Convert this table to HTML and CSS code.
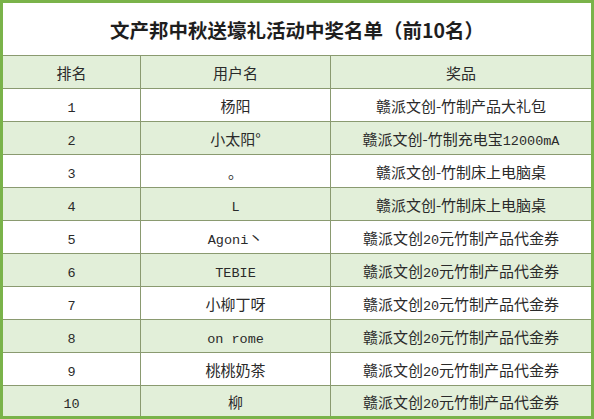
FILE: index.html
```html
<!DOCTYPE html>
<html lang="zh-CN">
<head>
<meta charset="utf-8">
<title>文产邦中秋送壕礼活动中奖名单</title>
<link rel="stylesheet" href="styles.css">
</head>
<body>
<div class="board">
  <div class="title">文产邦中秋送壕礼活动中奖名单（前10名）</div>
  <div class="cell head">排名</div>
  <div class="cell head">用户名</div>
  <div class="cell head end">奖品</div>

  <div class="cell"><span class="en">1</span></div>
  <div class="cell">杨阳</div>
  <div class="cell end">赣派文创-竹制产品大礼包</div>

  <div class="cell alt"><span class="en">2</span></div>
  <div class="cell alt">小太阳°</div>
  <div class="cell alt end">赣派文创-竹制充电宝<span class="en">12000mA</span></div>

  <div class="cell"><span class="en">3</span></div>
  <div class="cell">。</div>
  <div class="cell end">赣派文创-竹制床上电脑桌</div>

  <div class="cell alt"><span class="en">4</span></div>
  <div class="cell alt"><span class="en">L</span></div>
  <div class="cell alt end">赣派文创-竹制床上电脑桌</div>

  <div class="cell"><span class="en">5</span></div>
  <div class="cell"><span class="en">Agoni</span>丶</div>
  <div class="cell end">赣派文创<span class="en">20</span>元竹制产品代金券</div>

  <div class="cell alt"><span class="en">6</span></div>
  <div class="cell alt"><span class="en">TEBIE</span></div>
  <div class="cell alt end">赣派文创<span class="en">20</span>元竹制产品代金券</div>

  <div class="cell"><span class="en">7</span></div>
  <div class="cell">小柳丁呀</div>
  <div class="cell end">赣派文创<span class="en">20</span>元竹制产品代金券</div>

  <div class="cell alt"><span class="en">8</span></div>
  <div class="cell alt"><span class="en">on rome</span></div>
  <div class="cell alt end">赣派文创<span class="en">20</span>元竹制产品代金券</div>

  <div class="cell"><span class="en">9</span></div>
  <div class="cell">桃桃奶茶</div>
  <div class="cell end">赣派文创<span class="en">20</span>元竹制产品代金券</div>

  <div class="cell alt last"><span class="en">10</span></div>
  <div class="cell alt last">柳</div>
  <div class="cell alt last end">赣派文创<span class="en">20</span>元竹制产品代金券</div>
</div>
</body>
</html>
```

FILE: styles.css
```css
html, body {
  margin: 0;
  padding: 0;
  background: #ffffff;
}

.board {
  box-sizing: border-box;
  width: 594px;
  height: 419px;
  border: 3px solid #7ab34a;
  display: grid;
  grid-template-columns: 138px 190px 1fr;
  grid-template-rows: 53px repeat(10, 33px) 30px;
  font-family: "Noto Sans CJK SC", sans-serif;
  font-size: 15px;
  color: #2a2a2a;
}

.title {
  grid-column: 1 / 4;
  display: flex;
  align-items: center;
  justify-content: center;
  border-bottom: 1px solid #8a9a70;
  font-weight: 700;
  font-size: 19.5px;
  color: #1e1e1e;
  padding-top: 1px;
}

.cell {
  box-sizing: border-box;
  display: block;
  text-align: center;
  line-height: 33px;
  overflow: hidden;
  border-right: 1px solid #8a9a70;
  border-bottom: 1px solid #8a9a70;
  background: #ffffff;
  white-space: pre;
}

.cell.end {
  border-right: none;
}

.cell.last {
  border-bottom: none;
  line-height: 31px;
}

.en {
  font-family: "Liberation Mono", monospace;
  font-size: 13.5px;
}

.head {
  background: #e2efd9;
}

.alt {
  background: #e2efd9;
}
```
